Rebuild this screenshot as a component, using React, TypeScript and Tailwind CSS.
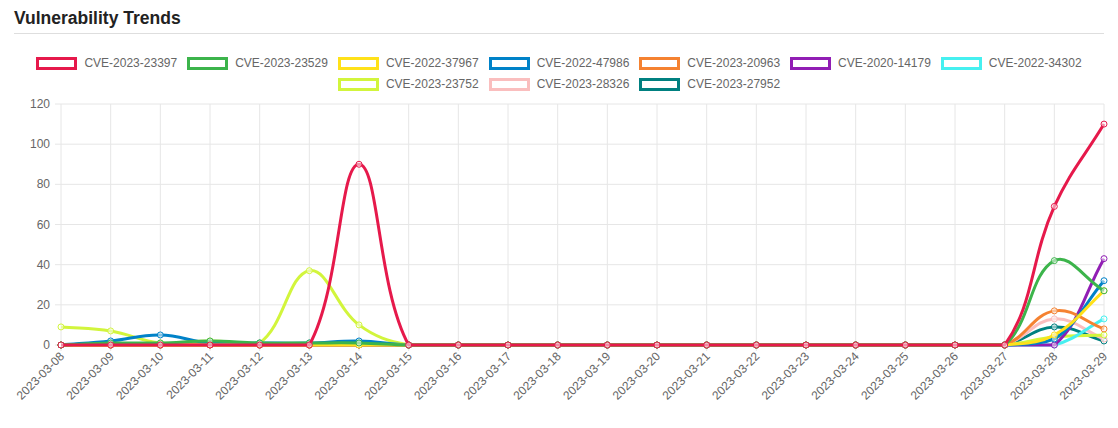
import React from 'react';

type Series = { name: string; color: string; data: number[] };

const Z = (n: number) => Array(n).fill(0);

const SERIES: Series[] = [
    { name: 'CVE-2023-23397', color: '#e6194b', data: [0, 0, 0, 0, 0, 0, 90, 0, ...Z(12), 69, 110] },
    { name: 'CVE-2023-23529', color: '#3cb44b', data: [0, 1, 1, 2, 1, 1, 1, 0, ...Z(12), 42, 27] },
    { name: 'CVE-2022-37967', color: '#ffe119', data: [0, 0, 0, 0, 0, 0, 0, 0, ...Z(12), 5, 27] },
    { name: 'CVE-2022-47986', color: '#0082c8', data: [0, 2, 5, 1, 1, 1, 2, 0, ...Z(12), 3, 32] },
    { name: 'CVE-2023-20963', color: '#f58231', data: [0, 0, 0, 0, 0, 0, 0, 0, ...Z(12), 17, 8] },
    { name: 'CVE-2020-14179', color: '#911eb4', data: [0, 0, 0, 0, 0, 0, 0, 0, ...Z(12), 0, 43] },
    { name: 'CVE-2022-34302', color: '#46f0f0', data: [0, 0, 0, 0, 0, 0, 0, 0, ...Z(12), 0, 13] },
    { name: 'CVE-2023-23752', color: '#d2f53c', data: [9, 7, 1, 2, 1, 37, 10, 0, ...Z(12), 4, 5] },
    { name: 'CVE-2023-28326', color: '#fabebe', data: [0, 0, 0, 0, 0, 0, 0, 0, ...Z(12), 13, 3] },
    { name: 'CVE-2023-27952', color: '#008080', data: [0, 0, 0, 0, 0, 0, 0, 0, ...Z(12), 9, 2] },
];

const DATES = Array.from({ length: 22 }, (_, i) => `2023-03-${String(8 + i).padStart(2, '0')}`);

const FONT = "'Liberation Sans', Arial, sans-serif";
const X0 = 61;
const X1 = 1104;
const Y0 = 244; // value 0, svg coords
const YTOP = 3; // value 120
const px = (i: number) => X0 + ((X1 - X0) * i) / 21;
const py = (v: number) => Y0 - ((Y0 - YTOP) * v) / 120;

// chart.js style spline, tension 0.4
function spline(pts: [number, number][]) {
    const t = 0.4;
    let d = `M${pts[0][0]},${pts[0][1]}`;
    const cps = pts.map((p, i) => {
        const prev = pts[i - 1] ?? p;
        const next = pts[i + 1] ?? p;
        const d01 = Math.hypot(p[0] - prev[0], p[1] - prev[1]);
        const d12 = Math.hypot(next[0] - p[0], next[1] - p[1]);
        const fa = (d01 / (d01 + d12 || 1)) * t;
        const fb = (d12 / (d01 + d12 || 1)) * t;
        return {
            prev: [p[0] - fa * (next[0] - prev[0]), Math.min(Y0, p[1] - fa * (next[1] - prev[1]))],
            next: [p[0] + fb * (next[0] - prev[0]), Math.min(Y0, p[1] + fb * (next[1] - prev[1]))],
        };
    });
    for (let i = 1; i < pts.length; i++) {
        const a = cps[i - 1].next;
        const b = cps[i].prev;
        d += ` C${a[0]},${a[1]} ${b[0]},${b[1]} ${pts[i][0]},${pts[i][1]}`;
    }
    return d;
}

export default function App() {
    return (
        <div className="h-[428px] w-[1118px] overflow-hidden bg-white text-[#666]" style={{ fontFamily: FONT }}>
            <div className="mx-[14px] border-b border-[#dedede] pt-[8px] pb-[5px]">
                <h2 className="text-[17.5px] leading-[20px] font-bold text-[#222]">Vulnerability Trends</h2>
            </div>

            <ul className="mx-auto flex w-[1060px] flex-wrap justify-center gap-x-[10px] gap-y-[8px] pt-[23px] text-[12px] leading-[13px]">
                {SERIES.map((s) => (
                    <li key={s.name} className="flex items-center gap-[7px]">
                        <span className="box-border h-[13px] w-[41px] border-[3px]" style={{ borderColor: s.color }} />
                        <span>{s.name}</span>
                    </li>
                ))}
            </ul>

            <svg width="1118" height="328" className="mt-[10px] block overflow-visible" style={{ fontFamily: FONT }}>
                {[0, 20, 40, 60, 80, 100, 120].map((v) => (
                    <g key={v}>
                        <line x1={55} x2={X1} y1={py(v)} y2={py(v)} stroke="#e6e6e6" />
                        <text x={50} y={py(v) + 4} textAnchor="end" fontSize="12" fill="#666">
                            {v}
                        </text>
                    </g>
                ))}
                {DATES.map((d, i) => (
                    <g key={d}>
                        <line x1={px(i)} x2={px(i)} y1={YTOP} y2={Y0 + 6} stroke="#e6e6e6" />
                        <text
                            x={px(i) + 4}
                            y={Y0 + 12}
                            textAnchor="end"
                            fontSize="12"
                            fill="#666"
                            transform={`rotate(-45 ${px(i) + 4} ${Y0 + 12})`}
                        >
                            {d}
                        </text>
                    </g>
                ))}
                {[...SERIES].reverse().map((s) => {
                    const pts = s.data.map((v, i) => [px(i), py(v)] as [number, number]);
                    return (
                        <g key={s.name}>
                            <path d={spline(pts)} fill="none" stroke={s.color} strokeWidth="3" />
                            {pts.map((p, i) => (
                                <circle key={i} cx={p[0]} cy={p[1]} r="3" fill="white" fillOpacity="0.5" stroke={s.color} strokeWidth="1" />
                            ))}
                        </g>
                    );
                })}
            </svg>
        </div>
    );
}
